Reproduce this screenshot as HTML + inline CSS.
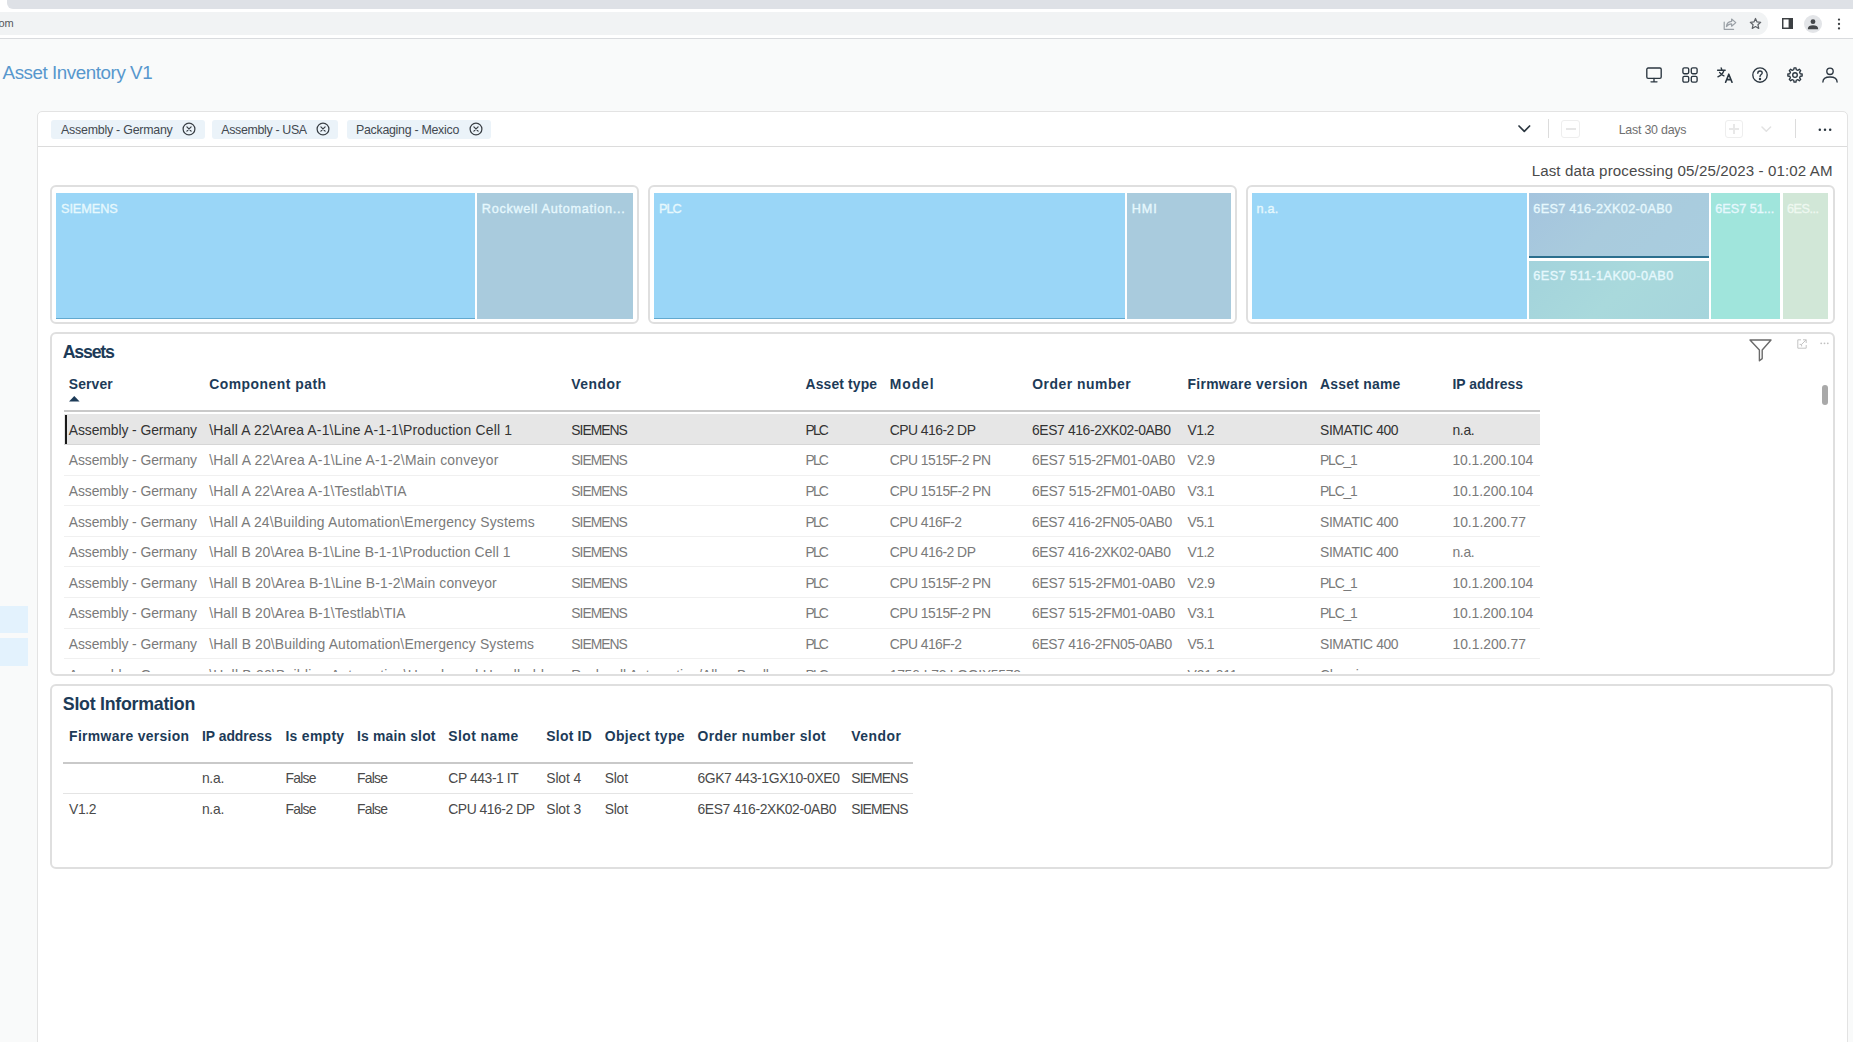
<!DOCTYPE html>
<html lang="en">
<head>
<meta charset="utf-8">
<title>Asset Inventory V1</title>
<style>
*{box-sizing:border-box;margin:0;padding:0}
html,body{width:1853px;height:1042px;overflow:hidden}
body{position:relative;background:#f9fafa;font-family:"Liberation Sans",sans-serif;}
.a{position:absolute}
.t{position:absolute;white-space:pre;font-family:"Liberation Sans",sans-serif}
svg{position:absolute;overflow:visible}
.card{position:absolute;border:2px solid #dfdfdf;border-radius:6px;background:#fff}
.tile{position:absolute;top:192.8px;height:126px}
.sep{position:absolute;left:64px;width:1476px;height:1px;background:#f0f0f0}
.hi svg{stroke:#2b3640;stroke-width:1.35;fill:none;stroke-linecap:round;stroke-linejoin:round}
</style>
</head>
<body>

<!-- browser chrome -->
<div class="a" style="left:0;top:0;width:1853px;height:38px;background:#fff"></div>
<div class="a" style="left:7px;top:0;width:1846px;height:9px;background:#dee1e6;border-bottom-left-radius:6px"></div>
<div class="a" style="left:-20px;top:12px;width:1788px;height:22.5px;background:#f1f3f4;border-radius:11px"></div>
<div class="a" style="left:0;top:38px;width:1853px;height:1px;background:#d9dbde"></div>

<!-- chrome icons -->
<svg style="left:1723px;top:17px" width="14" height="14" viewBox="0 0 14 14" fill="none" stroke="#9aa0a6" stroke-width="1.2" stroke-linejoin="round" stroke-linecap="round">
  <path d="M1.2,5.2 V12.3 H10.6"/>
  <path d="M3.4,9.6 C3.8,6.4 5.8,4.6 8.6,4.4 V2 L12.8,5.6 L8.6,9.2 V6.8 C6.4,6.8 4.7,7.7 3.4,9.6Z"/>
</svg>
<svg style="left:1748.6px;top:17.2px" width="13" height="13" viewBox="0 0 14 14" fill="none" stroke="#5f6368" stroke-width="1.3" stroke-linejoin="round">
  <path d="M7,1.6 L8.65,5.3 L12.6,5.7 L9.6,8.35 L10.5,12.3 L7,10.25 L3.5,12.3 L4.4,8.35 L1.4,5.7 L5.35,5.3Z"/>
</svg>
<svg style="left:1781.6px;top:18.3px" width="11" height="11" viewBox="0 0 12 12">
  <rect x="0.8" y="0.8" width="10.4" height="10.4" fill="none" stroke="#3c4043" stroke-width="1.6"/>
  <rect x="7.2" y="0.8" width="4" height="10.4" fill="#3c4043"/>
</svg>
<svg style="left:1804px;top:14.5px" width="18" height="18" viewBox="0 0 18 18">
  <circle cx="9" cy="9" r="9" fill="#e3e5e8"/>
  <circle cx="9" cy="6.7" r="2.4" fill="#44474a"/>
  <path d="M3.9,13.6 C3.9,11.2 6.2,10.2 9,10.2 C11.8,10.2 14.1,11.2 14.1,13.6 V14.2 H3.9Z" fill="#44474a"/>
</svg>
<svg style="left:1837px;top:18px" width="4" height="12" viewBox="0 0 4 12" fill="#3c4043">
  <circle cx="2" cy="1.6" r="1.15"/><circle cx="2" cy="6" r="1.15"/><circle cx="2" cy="10.4" r="1.15"/>
</svg>

<!-- app header icons -->
<div class="hi">
<svg style="left:1646.2px;top:66.8px" width="16" height="16" viewBox="0 0 16 16">
  <rect x="0.8" y="1" width="14.4" height="10.4" rx="1.3"/>
  <path d="M8,11.4 V14.8 M5,14.8 H11"/>
</svg>
<svg style="left:1681.5px;top:66.8px" width="16" height="16" viewBox="0 0 16 16">
  <rect x="0.9" y="0.9" width="5.8" height="5.8" rx="1.4"/><rect x="9.3" y="0.9" width="5.8" height="5.8" rx="1.4"/>
  <rect x="0.9" y="9.3" width="5.8" height="5.8" rx="1.4"/><rect x="9.3" y="9.3" width="5.8" height="5.8" rx="1.4"/>
</svg>
<svg style="left:1716.7px;top:66.8px" width="16" height="16" viewBox="0 0 16 16">
  <path d="M0.6,3.2 H8.2 M4.2,1 L4.9,3 M7,3.2 C6.2,6 3.6,8.6 0.9,9.8 M2.6,5.4 C3.6,7 5.2,8.2 6.9,8.9"/>
  <path d="M8.6,15.2 L11.8,7.2 L15,15.2 M9.8,12.6 H13.8" stroke-width="1.6"/>
</svg>
<svg style="left:1752px;top:66.8px" width="16" height="16" viewBox="0 0 16 16">
  <circle cx="8" cy="8" r="7.2"/>
  <path d="M5.8,6.2 C5.8,4.8 6.8,4 8,4 C9.3,4 10.2,4.8 10.2,6 C10.2,7.6 8,7.6 8,9.6"/>
  <circle cx="8" cy="12" r="0.55" fill="#2b3640"/>
</svg>
<svg style="left:1787.2px;top:66.8px" width="16" height="16" viewBox="0 0 16 16">
  <path d="M7.04,0.86 L8.96,0.86 L9.26,2.75 L10.82,3.40 L12.37,2.28 L13.72,3.63 L12.60,5.18 L13.25,6.74 L15.14,7.04 L15.14,8.96 L13.25,9.26 L12.60,10.82 L13.72,12.37 L12.37,13.72 L10.82,12.60 L9.26,13.25 L8.96,15.14 L7.04,15.14 L6.74,13.25 L5.18,12.60 L3.63,13.72 L2.28,12.37 L3.40,10.82 L2.75,9.26 L0.86,8.96 L0.86,7.04 L2.75,6.74 L3.40,5.18 L2.28,3.63 L3.63,2.28 L5.18,3.40 L6.74,2.75Z"/>
  <circle cx="8" cy="8" r="2.3"/>
</svg>
<svg style="left:1822.4px;top:66.8px" width="16" height="16" viewBox="0 0 16 16">
  <circle cx="8" cy="4.3" r="3.2"/>
  <path d="M0.9,15 C0.9,11.6 4,10 8,10 C12,10 15.1,11.6 15.1,15"/>
</svg>
</div>

<!-- left nav fragments -->
<div class="a" style="left:0;top:606px;width:28px;height:27px;background:#e3f2fd"></div>
<div class="a" style="left:0;top:638px;width:28px;height:28px;background:#e3f2fd"></div>

<!-- main panel -->
<div class="a" style="left:37px;top:111px;width:1811px;height:960px;background:#fff;border:1px solid #e3e3e3;border-radius:5px 5px 0 0"></div>
<div class="a" style="left:38px;top:146px;width:1809px;height:1px;background:#dcdcdc"></div>

<!-- chips -->
<div class="a" style="left:51px;top:120px;width:153.5px;height:18.7px;background:#ebf3f9;border-radius:3px"></div>
<div class="a" style="left:212.3px;top:120px;width:126px;height:18.7px;background:#ebf3f9;border-radius:3px"></div>
<div class="a" style="left:347px;top:120px;width:143.8px;height:18.7px;background:#ebf3f9;border-radius:3px"></div>
<svg style="left:182.2px;top:122.1px" width="14" height="14" viewBox="0 0 14 14" fill="none" stroke="#3a4046" stroke-width="1.25" stroke-linecap="round"><circle cx="7" cy="7" r="5.9"/><path d="M4.9,4.9 L9.1,9.1 M9.1,4.9 L4.9,9.1"/></svg>
<svg style="left:316.4px;top:122.1px" width="14" height="14" viewBox="0 0 14 14" fill="none" stroke="#3a4046" stroke-width="1.25" stroke-linecap="round"><circle cx="7" cy="7" r="5.9"/><path d="M4.9,4.9 L9.1,9.1 M9.1,4.9 L4.9,9.1"/></svg>
<svg style="left:468.5px;top:122.1px" width="14" height="14" viewBox="0 0 14 14" fill="none" stroke="#3a4046" stroke-width="1.25" stroke-linecap="round"><circle cx="7" cy="7" r="5.9"/><path d="M4.9,4.9 L9.1,9.1 M9.1,4.9 L4.9,9.1"/></svg>

<!-- filter bar right controls -->
<svg style="left:1518px;top:125px" width="13" height="8" viewBox="0 0 13 8" fill="none" stroke="#2b3640" stroke-width="1.7" stroke-linecap="round" stroke-linejoin="round"><path d="M1,1 L6.3,6.4 L11.6,1"/></svg>
<div class="a" style="left:1548px;top:119px;width:1px;height:19px;background:#dcdcdc"></div>
<div class="a" style="left:1561.3px;top:120px;width:19px;height:18px;border:1px solid #eeeeee;border-radius:3px"></div>
<div class="a" style="left:1565.5px;top:128.4px;width:10.5px;height:1.3px;background:#e6e6e6"></div>
<div class="a" style="left:1724.8px;top:120px;width:18.5px;height:18px;border:1px solid #eeeeee;border-radius:3px"></div>
<div class="a" style="left:1728.6px;top:128.4px;width:10.8px;height:1.3px;background:#e8e8e8"></div>
<div class="a" style="left:1733.4px;top:123.6px;width:1.3px;height:10.8px;background:#e8e8e8"></div>
<svg style="left:1761px;top:126px" width="11" height="7" viewBox="0 0 11 7" fill="none" stroke="#e2e2e2" stroke-width="1.5" stroke-linecap="round" stroke-linejoin="round"><path d="M1,1 L5.3,5.3 L9.6,1"/></svg>
<div class="a" style="left:1795px;top:119px;width:1px;height:19px;background:#dcdcdc"></div>
<svg style="left:1818px;top:127.5px" width="14" height="4" viewBox="0 0 14 4" fill="#2b3640"><circle cx="1.8" cy="1.7" r="1.25"/><circle cx="7" cy="1.7" r="1.25"/><circle cx="12.2" cy="1.7" r="1.25"/></svg>

<!-- treemap cards -->
<div class="card" style="left:50px;top:184.7px;width:589.3px;height:139.6px"></div>
<div class="card" style="left:647.8px;top:184.7px;width:589.3px;height:139.6px"></div>
<div class="card" style="left:1245.5px;top:184.7px;width:589px;height:139.6px"></div>

<!-- treemap 1 -->
<div class="tile" style="left:56.2px;width:418.6px;background:#9ad6f7;border-bottom:1.3px solid #62a9cf"></div>
<div class="tile" style="left:477.2px;width:156px;background:#a9cbdd"></div>
<!-- treemap 2 -->
<div class="tile" style="left:654px;width:471px;background:#9ad6f7;border-bottom:1.3px solid #62a9cf"></div>
<div class="tile" style="left:1127.2px;width:103.6px;background:#a9cbdd"></div>
<!-- treemap 3 -->
<div class="tile" style="left:1251.8px;width:275px;background:#9ad6f7"></div>
<div class="tile" style="left:1529px;width:179.6px;height:65.2px;background:linear-gradient(135deg,#a4c4de 0%,#a9cbdd 45%,#a9cddf 100%);border-bottom:2px solid #2b6f8e"></div>
<div class="tile" style="left:1529px;top:260.6px;width:179.6px;height:58.2px;background:linear-gradient(135deg,#a3d3dc 0%,#a9d9dc 50%,#a6d5dc 100%)"></div>
<div class="tile" style="left:1710.6px;width:69.5px;background:#a0e5dc"></div>
<div class="tile" style="left:1782.5px;width:45.6px;background:#d1e7d7"></div>

<!-- Assets card -->
<div class="card" style="left:50px;top:331.5px;width:1785px;height:344px"></div>
<!-- Slot card -->
<div class="card" style="left:50px;top:684px;width:1782.5px;height:185px"></div>

<!-- Assets icons -->
<svg style="left:1748.5px;top:338.5px" width="23" height="23" viewBox="0 0 23 23" fill="none" stroke="#6a6a6a" stroke-width="1.4" stroke-linejoin="round"><path d="M1,1 H22 L13.2,11 V19.6 L10.4,21.8 V11Z"/></svg>
<svg style="left:1796.5px;top:339px" width="10" height="10" viewBox="0 0 10 10" fill="none" stroke="#c4c4c4" stroke-width="1"><path d="M4,0.8 H0.8 V9.2 H9.2 V6"/><path d="M6,0.8 H9.2 V4 M9.2,0.8 L4.6,5.4"/><path d="M2.6,5.4 H4.6 V7.4" /></svg>
<svg style="left:1819.5px;top:341.6px" width="9" height="3" viewBox="0 0 9 3" fill="#c0c0c0"><circle cx="1.2" cy="1.3" r="0.9"/><circle cx="4.5" cy="1.3" r="0.9"/><circle cx="7.8" cy="1.3" r="0.9"/></svg>
<div class="a" style="left:1822px;top:385px;width:6px;height:20px;border-radius:3px;background:#a9a9a9"></div>

<!-- Assets table chrome -->
<svg style="left:69.3px;top:395.8px" width="11" height="6" viewBox="0 0 11 6"><path d="M0,5.6 L5.3,0 L10.6,5.6Z" fill="#1d3b58"/></svg>
<div class="a" style="left:64px;top:409.5px;width:1476px;height:2px;background:#c9c9c9"></div>
<div class="a" style="left:64px;top:414px;width:1476px;height:30.6px;background:#e6e6e6;border-bottom:1px solid #d6d6d6"></div>
<div class="a" style="left:65px;top:414.5px;width:2.2px;height:29.6px;background:#1a1a1a"></div>
<div class="sep" style="top:474.5px"></div>
<div class="sep" style="top:505.2px"></div>
<div class="sep" style="top:535.8px"></div>
<div class="sep" style="top:566.4px"></div>
<div class="sep" style="top:597.0px"></div>
<div class="sep" style="top:627.6px"></div>
<div class="sep" style="top:658.2px"></div>
<!-- clipped 9th row -->
<div class="a" style="left:52px;top:660px;width:1500px;height:11.5px;overflow:hidden"><span class="t" style="left:16.8px;top:9px;font-size:13.9px;line-height:13.9px;color:#7a7a7a;letter-spacing:-0.083px">Assembly - Germany</span><span class="t" style="left:157.2px;top:9px;font-size:13.9px;line-height:13.9px;color:#7a7a7a;letter-spacing:0.249px">\Hall B 20\Building Automation\Hazelwood Handheld</span><span class="t" style="left:519.3px;top:9px;font-size:13.9px;line-height:13.9px;color:#7a7a7a;letter-spacing:-0.103px">Rockwell Automation/Allen-Bradley</span><span class="t" style="left:753.5px;top:9px;font-size:13.9px;line-height:13.9px;color:#7a7a7a;letter-spacing:-1.810px">PLC</span><span class="t" style="left:837.7px;top:9px;font-size:13.9px;line-height:13.9px;color:#7a7a7a;letter-spacing:-0.274px">1756-L73 LOGIX5573</span><span class="t" style="left:1135.5px;top:9px;font-size:13.9px;line-height:13.9px;color:#7a7a7a;letter-spacing:-0.105px">V31.011</span><span class="t" style="left:1268.0px;top:9px;font-size:13.9px;line-height:13.9px;color:#7a7a7a;letter-spacing:-0.312px">Chemie</span></div>

<!-- Slot table chrome -->
<div class="a" style="left:63.3px;top:761.5px;width:850px;height:2px;background:#c9c9c9"></div>
<div class="a" style="left:63.3px;top:793px;width:850px;height:1px;background:#e4e4e4"></div>

<span class="t" style="left:-1.6px;top:18px;font-size:11px;line-height:11px;color:#55585c;letter-spacing:0.009px;">om</span>
<span class="t" style="left:2.6px;top:64px;font-size:18.8px;line-height:18.8px;color:#5797cd;letter-spacing:-0.447px;">Asset Inventory V1</span>
<span class="t" style="left:61.0px;top:124px;font-size:12.4px;line-height:12.4px;color:#434950;letter-spacing:-0.227px;">Assembly - Germany</span>
<span class="t" style="left:221.3px;top:124px;font-size:12.4px;line-height:12.4px;color:#434950;letter-spacing:-0.336px;">Assembly - USA</span>
<span class="t" style="left:356.0px;top:124px;font-size:12.4px;line-height:12.4px;color:#434950;letter-spacing:-0.285px;">Packaging - Mexico</span>
<span class="t" style="left:1618.7px;top:124px;font-size:12.4px;line-height:12.4px;color:#707070;letter-spacing:-0.222px;">Last 30 days</span>
<span class="t" style="left:1531.7px;top:163px;font-size:15.1px;line-height:15.1px;color:#4a4a4a;letter-spacing:0.114px;">Last data processing 05/25/2023 - 01:02 AM</span>
<span class="t" style="left:61.0px;top:203px;font-size:12.7px;line-height:12.7px;color:#e6f8fd;letter-spacing:-0.058px;-webkit-text-stroke:0.35px #e6f8fd;">SIEMENS</span>
<span class="t" style="left:481.8px;top:203px;font-size:12.7px;line-height:12.7px;color:#e6f8fd;letter-spacing:0.693px;-webkit-text-stroke:0.35px #e6f8fd;">Rockwell Automation...</span>
<span class="t" style="left:659.0px;top:203px;font-size:12.7px;line-height:12.7px;color:#e6f8fd;letter-spacing:-1.062px;-webkit-text-stroke:0.35px #e6f8fd;">PLC</span>
<span class="t" style="left:1131.8px;top:203px;font-size:12.7px;line-height:12.7px;color:#e6f8fd;letter-spacing:0.911px;-webkit-text-stroke:0.35px #e6f8fd;">HMI</span>
<span class="t" style="left:1256.6px;top:203px;font-size:12.7px;line-height:12.7px;color:#e6f8fd;letter-spacing:0.207px;-webkit-text-stroke:0.35px #e6f8fd;">n.a.</span>
<span class="t" style="left:1533.3px;top:203px;font-size:12.7px;line-height:12.7px;color:#e6f8fd;letter-spacing:0.299px;-webkit-text-stroke:0.35px #e6f8fd;">6ES7 416-2XK02-0AB0</span>
<span class="t" style="left:1533.3px;top:270px;font-size:12.7px;line-height:12.7px;color:#e6f8fd;letter-spacing:0.422px;-webkit-text-stroke:0.35px #e6f8fd;">6ES7 511-1AK00-0AB0</span>
<span class="t" style="left:1715.3px;top:203px;font-size:12.7px;line-height:12.7px;color:#e6f8fd;letter-spacing:-0.025px;-webkit-text-stroke:0.35px #e6f8fd;">6ES7 51...</span>
<span class="t" style="left:1787.0px;top:203px;font-size:12.7px;line-height:12.7px;color:#eef8f0;letter-spacing:-0.510px;-webkit-text-stroke:0.35px #eef8f0;">6ES...</span>
<span class="t" style="left:62.7px;top:344px;font-size:17.8px;line-height:17.8px;font-weight:700;color:#1d3b58;letter-spacing:-1.221px;">Assets</span>
<span class="t" style="left:62.8px;top:696px;font-size:17.8px;line-height:17.8px;font-weight:700;color:#1d3b58;letter-spacing:-0.257px;">Slot Information</span>
<span class="t" style="left:68.8px;top:378px;font-size:13.9px;line-height:13.9px;font-weight:700;color:#1d3b58;letter-spacing:0.122px;">Server</span>
<span class="t" style="left:209.2px;top:378px;font-size:13.9px;line-height:13.9px;font-weight:700;color:#1d3b58;letter-spacing:0.497px;">Component path</span>
<span class="t" style="left:571.3px;top:378px;font-size:13.9px;line-height:13.9px;font-weight:700;color:#1d3b58;letter-spacing:0.501px;">Vendor</span>
<span class="t" style="left:805.5px;top:378px;font-size:13.9px;line-height:13.9px;font-weight:700;color:#1d3b58;letter-spacing:0.143px;">Asset type</span>
<span class="t" style="left:889.8px;top:378px;font-size:13.9px;line-height:13.9px;font-weight:700;color:#1d3b58;letter-spacing:0.892px;">Model</span>
<span class="t" style="left:1032.2px;top:378px;font-size:13.9px;line-height:13.9px;font-weight:700;color:#1d3b58;letter-spacing:0.523px;">Order number</span>
<span class="t" style="left:1187.4px;top:378px;font-size:13.9px;line-height:13.9px;font-weight:700;color:#1d3b58;letter-spacing:0.335px;">Firmware version</span>
<span class="t" style="left:1320.0px;top:378px;font-size:13.9px;line-height:13.9px;font-weight:700;color:#1d3b58;letter-spacing:0.252px;">Asset name</span>
<span class="t" style="left:1452.4px;top:378px;font-size:13.9px;line-height:13.9px;font-weight:700;color:#1d3b58;letter-spacing:0.058px;">IP address</span>
<span class="t" style="left:68.8px;top:424px;font-size:13.9px;line-height:13.9px;color:#333333;letter-spacing:-0.083px;">Assembly - Germany</span>
<span class="t" style="left:209.2px;top:424px;font-size:13.9px;line-height:13.9px;color:#333333;letter-spacing:0.200px;">\Hall A 22\Area A-1\Line A-1-1\Production Cell 1</span>
<span class="t" style="left:571.3px;top:424px;font-size:13.9px;line-height:13.9px;color:#333333;letter-spacing:-0.990px;">SIEMENS</span>
<span class="t" style="left:805.5px;top:424px;font-size:13.9px;line-height:13.9px;color:#333333;letter-spacing:-1.810px;">PLC</span>
<span class="t" style="left:889.7px;top:424px;font-size:13.9px;line-height:13.9px;color:#333333;letter-spacing:-0.515px;">CPU 416-2 DP</span>
<span class="t" style="left:1032.0px;top:424px;font-size:13.9px;line-height:13.9px;color:#333333;letter-spacing:-0.388px;">6ES7 416-2XK02-0AB0</span>
<span class="t" style="left:1187.5px;top:424px;font-size:13.9px;line-height:13.9px;color:#333333;letter-spacing:-0.495px;">V1.2</span>
<span class="t" style="left:1320.0px;top:424px;font-size:13.9px;line-height:13.9px;color:#333333;letter-spacing:-0.377px;">SIMATIC 400</span>
<span class="t" style="left:1452.4px;top:424px;font-size:13.9px;line-height:13.9px;color:#333333;letter-spacing:-0.293px;">n.a.</span>
<span class="t" style="left:68.8px;top:454px;font-size:13.9px;line-height:13.9px;color:#7a7a7a;letter-spacing:-0.083px;">Assembly - Germany</span>
<span class="t" style="left:209.2px;top:454px;font-size:13.9px;line-height:13.9px;color:#7a7a7a;letter-spacing:0.260px;">\Hall A 22\Area A-1\Line A-1-2\Main conveyor</span>
<span class="t" style="left:571.3px;top:454px;font-size:13.9px;line-height:13.9px;color:#7a7a7a;letter-spacing:-0.990px;">SIEMENS</span>
<span class="t" style="left:805.5px;top:454px;font-size:13.9px;line-height:13.9px;color:#7a7a7a;letter-spacing:-1.810px;">PLC</span>
<span class="t" style="left:889.7px;top:454px;font-size:13.9px;line-height:13.9px;color:#7a7a7a;letter-spacing:-0.521px;">CPU 1515F-2 PN</span>
<span class="t" style="left:1032.0px;top:454px;font-size:13.9px;line-height:13.9px;color:#7a7a7a;letter-spacing:-0.236px;">6ES7 515-2FM01-0AB0</span>
<span class="t" style="left:1187.5px;top:454px;font-size:13.9px;line-height:13.9px;color:#7a7a7a;letter-spacing:-0.395px;">V2.9</span>
<span class="t" style="left:1320.0px;top:454px;font-size:13.9px;line-height:13.9px;color:#7a7a7a;letter-spacing:-1.157px;">PLC_1</span>
<span class="t" style="left:1452.4px;top:454px;font-size:13.9px;line-height:13.9px;color:#7a7a7a;letter-spacing:-0.034px;">10.1.200.104</span>
<span class="t" style="left:68.8px;top:485px;font-size:13.9px;line-height:13.9px;color:#7a7a7a;letter-spacing:-0.083px;">Assembly - Germany</span>
<span class="t" style="left:209.2px;top:485px;font-size:13.9px;line-height:13.9px;color:#7a7a7a;letter-spacing:0.247px;">\Hall A 22\Area A-1\Testlab\TIA</span>
<span class="t" style="left:571.3px;top:485px;font-size:13.9px;line-height:13.9px;color:#7a7a7a;letter-spacing:-0.990px;">SIEMENS</span>
<span class="t" style="left:805.5px;top:485px;font-size:13.9px;line-height:13.9px;color:#7a7a7a;letter-spacing:-1.810px;">PLC</span>
<span class="t" style="left:889.7px;top:485px;font-size:13.9px;line-height:13.9px;color:#7a7a7a;letter-spacing:-0.521px;">CPU 1515F-2 PN</span>
<span class="t" style="left:1032.0px;top:485px;font-size:13.9px;line-height:13.9px;color:#7a7a7a;letter-spacing:-0.236px;">6ES7 515-2FM01-0AB0</span>
<span class="t" style="left:1187.5px;top:485px;font-size:13.9px;line-height:13.9px;color:#7a7a7a;letter-spacing:-0.495px;">V3.1</span>
<span class="t" style="left:1320.0px;top:485px;font-size:13.9px;line-height:13.9px;color:#7a7a7a;letter-spacing:-1.157px;">PLC_1</span>
<span class="t" style="left:1452.4px;top:485px;font-size:13.9px;line-height:13.9px;color:#7a7a7a;letter-spacing:-0.034px;">10.1.200.104</span>
<span class="t" style="left:68.8px;top:516px;font-size:13.9px;line-height:13.9px;color:#7a7a7a;letter-spacing:-0.083px;">Assembly - Germany</span>
<span class="t" style="left:209.2px;top:516px;font-size:13.9px;line-height:13.9px;color:#7a7a7a;letter-spacing:0.190px;">\Hall A 24\Building Automation\Emergency Systems</span>
<span class="t" style="left:571.3px;top:516px;font-size:13.9px;line-height:13.9px;color:#7a7a7a;letter-spacing:-0.990px;">SIEMENS</span>
<span class="t" style="left:805.5px;top:516px;font-size:13.9px;line-height:13.9px;color:#7a7a7a;letter-spacing:-1.810px;">PLC</span>
<span class="t" style="left:889.7px;top:516px;font-size:13.9px;line-height:13.9px;color:#7a7a7a;letter-spacing:-0.540px;">CPU 416F-2</span>
<span class="t" style="left:1032.0px;top:516px;font-size:13.9px;line-height:13.9px;color:#7a7a7a;letter-spacing:-0.319px;">6ES7 416-2FN05-0AB0</span>
<span class="t" style="left:1187.5px;top:516px;font-size:13.9px;line-height:13.9px;color:#7a7a7a;letter-spacing:-0.495px;">V5.1</span>
<span class="t" style="left:1320.0px;top:516px;font-size:13.9px;line-height:13.9px;color:#7a7a7a;letter-spacing:-0.377px;">SIMATIC 400</span>
<span class="t" style="left:1452.4px;top:516px;font-size:13.9px;line-height:13.9px;color:#7a7a7a;letter-spacing:0.010px;">10.1.200.77</span>
<span class="t" style="left:68.8px;top:546px;font-size:13.9px;line-height:13.9px;color:#7a7a7a;letter-spacing:-0.083px;">Assembly - Germany</span>
<span class="t" style="left:209.2px;top:546px;font-size:13.9px;line-height:13.9px;color:#7a7a7a;letter-spacing:0.104px;">\Hall B 20\Area B-1\Line B-1-1\Production Cell 1</span>
<span class="t" style="left:571.3px;top:546px;font-size:13.9px;line-height:13.9px;color:#7a7a7a;letter-spacing:-0.990px;">SIEMENS</span>
<span class="t" style="left:805.5px;top:546px;font-size:13.9px;line-height:13.9px;color:#7a7a7a;letter-spacing:-1.810px;">PLC</span>
<span class="t" style="left:889.7px;top:546px;font-size:13.9px;line-height:13.9px;color:#7a7a7a;letter-spacing:-0.515px;">CPU 416-2 DP</span>
<span class="t" style="left:1032.0px;top:546px;font-size:13.9px;line-height:13.9px;color:#7a7a7a;letter-spacing:-0.388px;">6ES7 416-2XK02-0AB0</span>
<span class="t" style="left:1187.5px;top:546px;font-size:13.9px;line-height:13.9px;color:#7a7a7a;letter-spacing:-0.495px;">V1.2</span>
<span class="t" style="left:1320.0px;top:546px;font-size:13.9px;line-height:13.9px;color:#7a7a7a;letter-spacing:-0.377px;">SIMATIC 400</span>
<span class="t" style="left:1452.4px;top:546px;font-size:13.9px;line-height:13.9px;color:#7a7a7a;letter-spacing:-0.293px;">n.a.</span>
<span class="t" style="left:68.8px;top:577px;font-size:13.9px;line-height:13.9px;color:#7a7a7a;letter-spacing:-0.083px;">Assembly - Germany</span>
<span class="t" style="left:209.2px;top:577px;font-size:13.9px;line-height:13.9px;color:#7a7a7a;letter-spacing:0.151px;">\Hall B 20\Area B-1\Line B-1-2\Main conveyor</span>
<span class="t" style="left:571.3px;top:577px;font-size:13.9px;line-height:13.9px;color:#7a7a7a;letter-spacing:-0.990px;">SIEMENS</span>
<span class="t" style="left:805.5px;top:577px;font-size:13.9px;line-height:13.9px;color:#7a7a7a;letter-spacing:-1.810px;">PLC</span>
<span class="t" style="left:889.7px;top:577px;font-size:13.9px;line-height:13.9px;color:#7a7a7a;letter-spacing:-0.521px;">CPU 1515F-2 PN</span>
<span class="t" style="left:1032.0px;top:577px;font-size:13.9px;line-height:13.9px;color:#7a7a7a;letter-spacing:-0.236px;">6ES7 515-2FM01-0AB0</span>
<span class="t" style="left:1187.5px;top:577px;font-size:13.9px;line-height:13.9px;color:#7a7a7a;letter-spacing:-0.395px;">V2.9</span>
<span class="t" style="left:1320.0px;top:577px;font-size:13.9px;line-height:13.9px;color:#7a7a7a;letter-spacing:-1.157px;">PLC_1</span>
<span class="t" style="left:1452.4px;top:577px;font-size:13.9px;line-height:13.9px;color:#7a7a7a;letter-spacing:-0.034px;">10.1.200.104</span>
<span class="t" style="left:68.8px;top:607px;font-size:13.9px;line-height:13.9px;color:#7a7a7a;letter-spacing:-0.083px;">Assembly - Germany</span>
<span class="t" style="left:209.2px;top:607px;font-size:13.9px;line-height:13.9px;color:#7a7a7a;letter-spacing:0.137px;">\Hall B 20\Area B-1\Testlab\TIA</span>
<span class="t" style="left:571.3px;top:607px;font-size:13.9px;line-height:13.9px;color:#7a7a7a;letter-spacing:-0.990px;">SIEMENS</span>
<span class="t" style="left:805.5px;top:607px;font-size:13.9px;line-height:13.9px;color:#7a7a7a;letter-spacing:-1.810px;">PLC</span>
<span class="t" style="left:889.7px;top:607px;font-size:13.9px;line-height:13.9px;color:#7a7a7a;letter-spacing:-0.521px;">CPU 1515F-2 PN</span>
<span class="t" style="left:1032.0px;top:607px;font-size:13.9px;line-height:13.9px;color:#7a7a7a;letter-spacing:-0.236px;">6ES7 515-2FM01-0AB0</span>
<span class="t" style="left:1187.5px;top:607px;font-size:13.9px;line-height:13.9px;color:#7a7a7a;letter-spacing:-0.495px;">V3.1</span>
<span class="t" style="left:1320.0px;top:607px;font-size:13.9px;line-height:13.9px;color:#7a7a7a;letter-spacing:-1.157px;">PLC_1</span>
<span class="t" style="left:1452.4px;top:607px;font-size:13.9px;line-height:13.9px;color:#7a7a7a;letter-spacing:-0.034px;">10.1.200.104</span>
<span class="t" style="left:68.8px;top:638px;font-size:13.9px;line-height:13.9px;color:#7a7a7a;letter-spacing:-0.083px;">Assembly - Germany</span>
<span class="t" style="left:209.2px;top:638px;font-size:13.9px;line-height:13.9px;color:#7a7a7a;letter-spacing:0.144px;">\Hall B 20\Building Automation\Emergency Systems</span>
<span class="t" style="left:571.3px;top:638px;font-size:13.9px;line-height:13.9px;color:#7a7a7a;letter-spacing:-0.990px;">SIEMENS</span>
<span class="t" style="left:805.5px;top:638px;font-size:13.9px;line-height:13.9px;color:#7a7a7a;letter-spacing:-1.810px;">PLC</span>
<span class="t" style="left:889.7px;top:638px;font-size:13.9px;line-height:13.9px;color:#7a7a7a;letter-spacing:-0.540px;">CPU 416F-2</span>
<span class="t" style="left:1032.0px;top:638px;font-size:13.9px;line-height:13.9px;color:#7a7a7a;letter-spacing:-0.319px;">6ES7 416-2FN05-0AB0</span>
<span class="t" style="left:1187.5px;top:638px;font-size:13.9px;line-height:13.9px;color:#7a7a7a;letter-spacing:-0.495px;">V5.1</span>
<span class="t" style="left:1320.0px;top:638px;font-size:13.9px;line-height:13.9px;color:#7a7a7a;letter-spacing:-0.377px;">SIMATIC 400</span>
<span class="t" style="left:1452.4px;top:638px;font-size:13.9px;line-height:13.9px;color:#7a7a7a;letter-spacing:0.010px;">10.1.200.77</span>
<span class="t" style="left:69.1px;top:730px;font-size:13.9px;line-height:13.9px;font-weight:700;color:#1d3b58;letter-spacing:0.328px;">Firmware version</span>
<span class="t" style="left:201.9px;top:730px;font-size:13.9px;line-height:13.9px;font-weight:700;color:#1d3b58;letter-spacing:0.008px;">IP address</span>
<span class="t" style="left:285.4px;top:730px;font-size:13.9px;line-height:13.9px;font-weight:700;color:#1d3b58;letter-spacing:0.330px;">Is empty</span>
<span class="t" style="left:356.9px;top:730px;font-size:13.9px;line-height:13.9px;font-weight:700;color:#1d3b58;letter-spacing:0.198px;">Is main slot</span>
<span class="t" style="left:448.3px;top:730px;font-size:13.9px;line-height:13.9px;font-weight:700;color:#1d3b58;letter-spacing:0.434px;">Slot name</span>
<span class="t" style="left:546.3px;top:730px;font-size:13.9px;line-height:13.9px;font-weight:700;color:#1d3b58;letter-spacing:0.243px;">Slot ID</span>
<span class="t" style="left:604.7px;top:730px;font-size:13.9px;line-height:13.9px;font-weight:700;color:#1d3b58;letter-spacing:0.422px;">Object type</span>
<span class="t" style="left:697.4px;top:730px;font-size:13.9px;line-height:13.9px;font-weight:700;color:#1d3b58;letter-spacing:0.448px;">Order number slot</span>
<span class="t" style="left:851.3px;top:730px;font-size:13.9px;line-height:13.9px;font-weight:700;color:#1d3b58;letter-spacing:0.518px;">Vendor</span>
<span class="t" style="left:201.9px;top:772px;font-size:13.9px;line-height:13.9px;color:#4a4a4a;letter-spacing:-0.243px;">n.a.</span>
<span class="t" style="left:285.4px;top:772px;font-size:13.9px;line-height:13.9px;color:#4a4a4a;letter-spacing:-0.734px;">False</span>
<span class="t" style="left:356.9px;top:772px;font-size:13.9px;line-height:13.9px;color:#4a4a4a;letter-spacing:-0.734px;">False</span>
<span class="t" style="left:448.3px;top:772px;font-size:13.9px;line-height:13.9px;color:#4a4a4a;letter-spacing:-0.413px;">CP 443-1 IT</span>
<span class="t" style="left:546.3px;top:772px;font-size:13.9px;line-height:13.9px;color:#4a4a4a;letter-spacing:-0.139px;">Slot 4</span>
<span class="t" style="left:604.7px;top:772px;font-size:13.9px;line-height:13.9px;color:#4a4a4a;letter-spacing:-0.209px;">Slot</span>
<span class="t" style="left:697.4px;top:772px;font-size:13.9px;line-height:13.9px;color:#4a4a4a;letter-spacing:-0.360px;">6GK7 443-1GX10-0XE0</span>
<span class="t" style="left:851.3px;top:772px;font-size:13.9px;line-height:13.9px;color:#4a4a4a;letter-spacing:-0.904px;">SIEMENS</span>
<span class="t" style="left:69.1px;top:803px;font-size:13.9px;line-height:13.9px;color:#4a4a4a;letter-spacing:-0.395px;">V1.2</span>
<span class="t" style="left:201.9px;top:803px;font-size:13.9px;line-height:13.9px;color:#4a4a4a;letter-spacing:-0.243px;">n.a.</span>
<span class="t" style="left:285.4px;top:803px;font-size:13.9px;line-height:13.9px;color:#4a4a4a;letter-spacing:-0.734px;">False</span>
<span class="t" style="left:356.9px;top:803px;font-size:13.9px;line-height:13.9px;color:#4a4a4a;letter-spacing:-0.734px;">False</span>
<span class="t" style="left:448.3px;top:803px;font-size:13.9px;line-height:13.9px;color:#4a4a4a;letter-spacing:-0.473px;">CPU 416-2 DP</span>
<span class="t" style="left:546.3px;top:803px;font-size:13.9px;line-height:13.9px;color:#4a4a4a;letter-spacing:-0.139px;">Slot 3</span>
<span class="t" style="left:604.7px;top:803px;font-size:13.9px;line-height:13.9px;color:#4a4a4a;letter-spacing:-0.209px;">Slot</span>
<span class="t" style="left:697.4px;top:803px;font-size:13.9px;line-height:13.9px;color:#4a4a4a;letter-spacing:-0.377px;">6ES7 416-2XK02-0AB0</span>
<span class="t" style="left:851.3px;top:803px;font-size:13.9px;line-height:13.9px;color:#4a4a4a;letter-spacing:-0.904px;">SIEMENS</span>

</body>
</html>
